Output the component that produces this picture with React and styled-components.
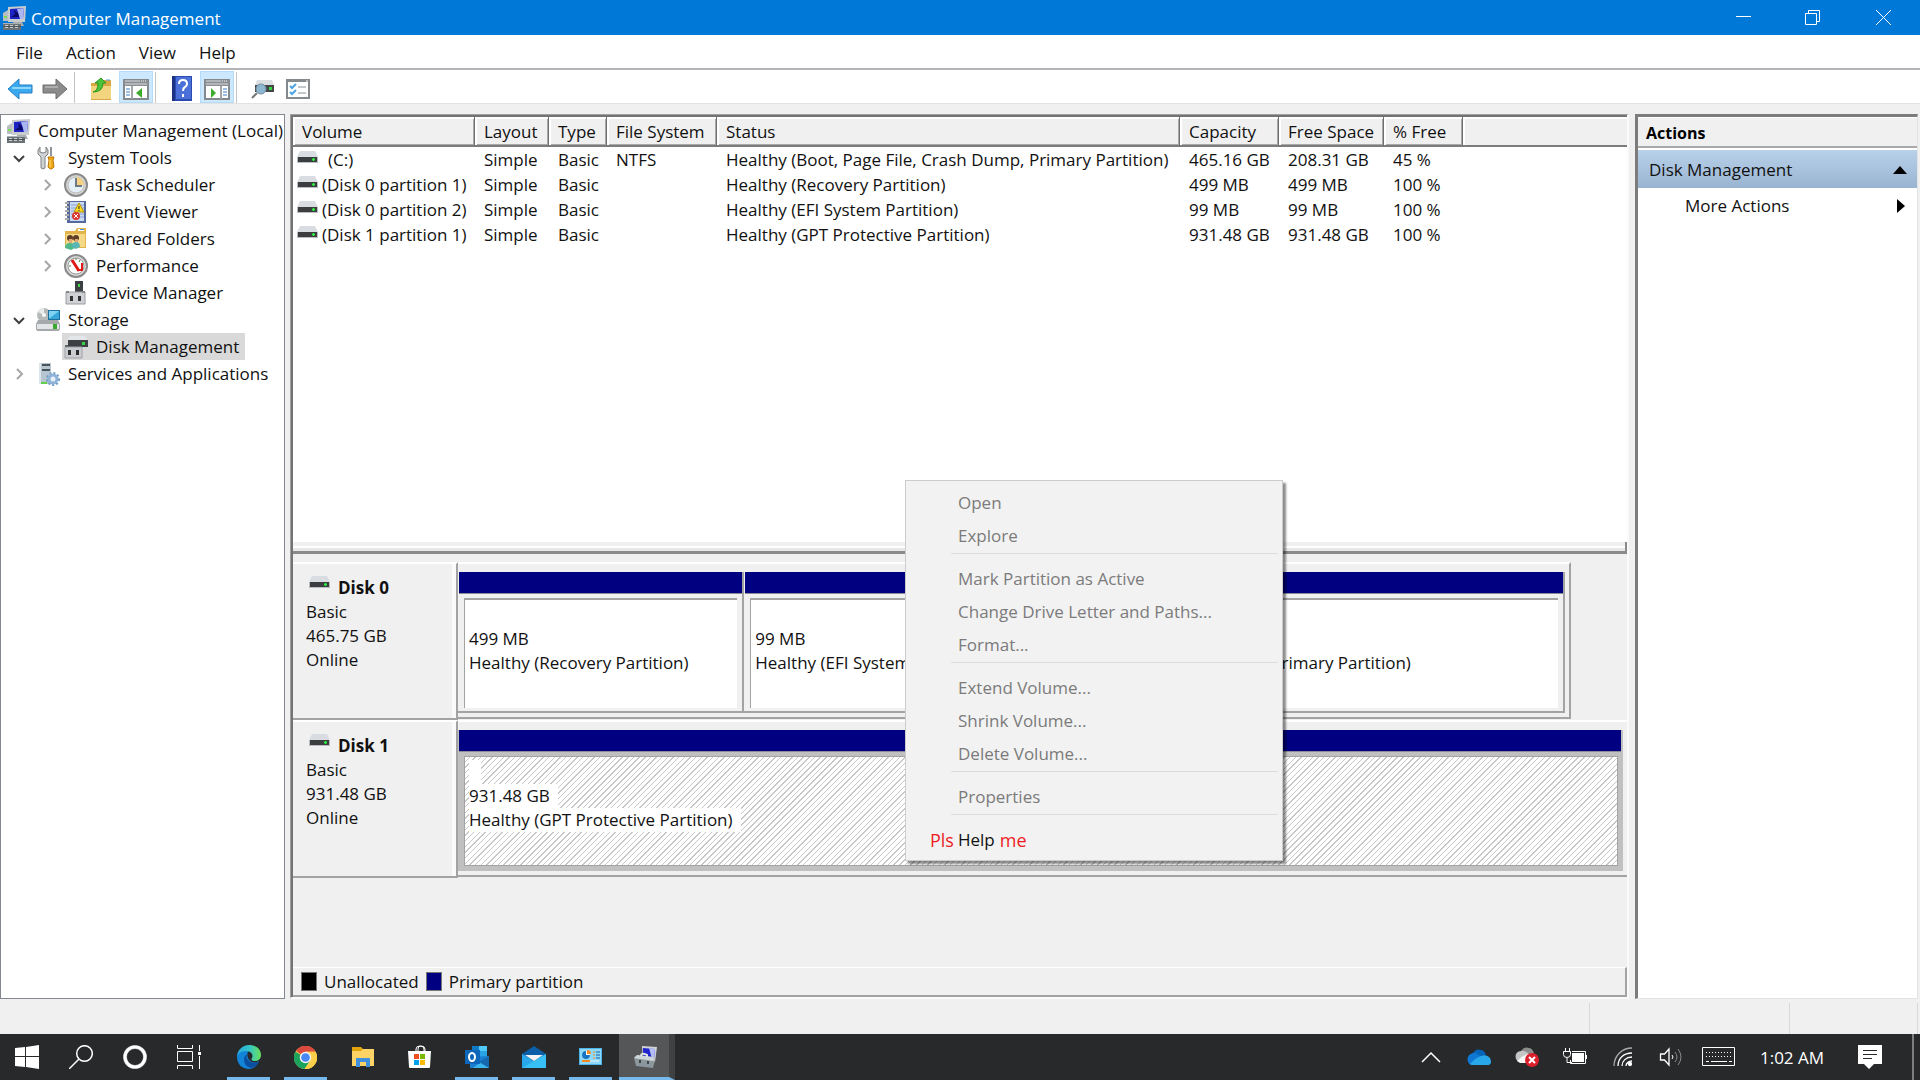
import React from 'react'
import styled, { createGlobalStyle, css } from 'styled-components'

const volumes = [
  { name: '(C:)', indent: true, fs: 'NTFS', status: 'Healthy (Boot, Page File, Crash Dump, Primary Partition)', capacity: '465.16 GB', free: '208.31 GB', percent: '45 %' },
  { name: '(Disk 0 partition 1)', fs: '', status: 'Healthy (Recovery Partition)', capacity: '499 MB', free: '499 MB', percent: '100 %' },
  { name: '(Disk 0 partition 2)', fs: '', status: 'Healthy (EFI System Partition)', capacity: '99 MB', free: '99 MB', percent: '100 %' },
  { name: '(Disk 1 partition 1)', fs: '', status: 'Healthy (GPT Protective Partition)', capacity: '931.48 GB', free: '931.48 GB', percent: '100 %' },
]

const columns = [
  { title: 'Volume', width: 182 },
  { title: 'Layout', width: 74 },
  { title: 'Type', width: 58 },
  { title: 'File System', width: 110 },
  { title: 'Status', width: 463 },
  { title: 'Capacity', width: 99 },
  { title: 'Free Space', width: 105 },
  { title: '% Free', width: 79 },
]

const menuGroups = [
  [ 'Open', 'Explore' ],
  [ 'Mark Partition as Active', 'Change Drive Letter and Paths...', 'Format...' ],
  [ 'Extend Volume...', 'Shrink Volume...', 'Delete Volume...' ],
  [ 'Properties' ],
]

/* ---------- icons ---------- */

const DriveIcon = () => (
  <svg width="22" height="13" viewBox="0 0 22 13">
    <path d="M3 0h15l3 6H0z" fill="#d9dde1" />
    <path d="M0 6h21v6H0z" fill="#b9bdc2" />
    <path d="M1 6h19v5H1z" fill="#3b3d3f" />
    <path d="M15 7h3v3h-3z" fill="#1f8f2a" />
    <path d="M16 7h1v3h-1zM15 8h3v1h-3z" fill="#35f04a" />
  </svg>
)

const ComputerIcon = () => (
  <svg width="24" height="24" viewBox="0 0 24 24">
    <path d="M1 7l5-3v11H1z" fill="#b9bec2" />
    <path d="M2 10h3v2H2z" fill="#7ddd4f" />
    <path d="M6 1l18-1-1 16H6z" fill="#c9cccd" />
    <path d="M8 3l14-1-1 11H8z" fill="#1c22c4" />
    <path d="M15 3l7-1-1 11h-3z" fill="#aab6f2" />
    <path d="M9 11l4-3-1-4 4 3 1 4z" fill="#0a0a66" />
    <path d="M11 16h9l2 4H11z" fill="#a9adaf" />
    <path d="M1 17h18v7H1z" fill="#6b7377" />
    <path d="M1 17h18v1H1z" fill="#aab1b5" />
    <path d="M3 19h3v3H3zM8 19h3v3H8zM13 19h3v3h-3z" fill="#c6cccf" />
    <path d="M1 20h18v1H1z" fill="#4b5357" />
  </svg>
)

const ToolsIcon = () => (
  <svg width="24" height="24" viewBox="0 0 24 24">
    <path d="M4 1L2 4v4l3 3v11q2 2 4 0V11l3-3V4L10 1v5L7 7 4 6z" fill="#cfd2d3" stroke="#7e8385" />
    <path d="M14 1h2v9h-2z" fill="#8d9396" />
    <path d="M12 11h6l-1 3 1 7q-3 4-6 0l1-7z" fill="#f0a818" stroke="#b97708" />
    <path d="M14 14v7" stroke="#ffdf7d" />
  </svg>
)

const ClockIcon = () => (
  <svg width="24" height="24" viewBox="0 0 24 24">
    <circle cx="12" cy="12" r="11" fill="#d6d6d4" stroke="#8a8a8a" strokeWidth="2" />
    <circle cx="12" cy="12" r="8" fill="#e4eff8" stroke="#bbb" />
    <path d="M12 4a8 8 0 0 1 8 8h-8z" fill="#f4d184" />
    <path d="M12 5v8h6" fill="none" stroke="#6f7a84" strokeWidth="2" />
  </svg>
)

const EventIcon = () => (
  <svg width="24" height="24" viewBox="0 0 24 24">
    <path d="M3 1h19v22H3z" fill="#56699c" />
    <path d="M6 2h14v19H6z" fill="#c9daf2" />
    <path d="M7 5h13M7 8h13M7 11h13M7 14h13M7 17h13" stroke="#8ea6d4" />
    <path d="M1 3h4M1 7h4M1 11h4M1 15h4M1 19h4" stroke="#aaa" strokeWidth="2" />
    <path d="M15 3l5 9H10z" fill="#ffdc20" stroke="#b49008" />
    <path d="M15 6v3M15 10v1" stroke="#222" />
    <circle cx="12" cy="16" r="4" fill="#d83a32" />
    <path d="M10 14l4 4M14 14l-4 4" stroke="#fff" />
  </svg>
)

const SharedIcon = () => (
  <svg width="24" height="24" viewBox="0 0 24 24">
    <path d="M1 4h10l2-3h9v20H1z" fill="#e2b44c" />
    <path d="M2 7h19v13H2z" fill="#f5d987" />
    <path d="M14 2h6v2h-6z" fill="#fff" />
    <path d="M16 2h4v1h-4z" fill="#4c95d8" />
    <circle cx="6" cy="11" r="3" fill="#5c3d28" />
    <circle cx="12" cy="11" r="3" fill="#5c3d28" />
    <path d="M5 12h3v4H5zM11 12h3v4h-3z" fill="#e0a878" />
    <path d="M1 21q0-5 5-5t5 5l-4 2z" fill="#4fb98a" />
    <path d="M8 20q0-5 4-5t4 5l-4 2z" fill="#58b7b4" />
  </svg>
)

const GaugeIcon = () => (
  <svg width="24" height="24" viewBox="0 0 24 24">
    <circle cx="12" cy="12" r="11" fill="#dadada" stroke="#8a8a8a" strokeWidth="2" />
    <circle cx="12" cy="12" r="8" fill="#fff" stroke="#999" />
    <path d="M5 12h2M7 7l1 1M12 4v2M16 6l-1 2" stroke="#477f48" />
    <path d="M8 6l7 11" fill="none" stroke="#e01818" strokeWidth="3" />
    <path d="M18 9v7h-5" fill="none" stroke="#e01818" strokeWidth="2" />
  </svg>
)

const DeviceIcon = () => (
  <svg width="24" height="24" viewBox="0 0 24 24">
    <path d="M11 0h8v12h-8z" fill="#3d4043" />
    <path d="M14 3h2v3h-2z" fill="#43d94a" />
    <path d="M2 11h19v12H2z" fill="#cfd1d5" stroke="#9a9da2" />
    <path d="M6 15h3v5H6zM14 15h3v5h-3z" fill="#333" />
    <path d="M2 10h3v2H2zM18 10h3v2h-3z" fill="#888" />
  </svg>
)

const StorageIcon = () => (
  <svg width="24" height="24" viewBox="0 0 24 24">
    <circle cx="8" cy="7" r="7" fill="#b6bab9" />
    <path d="M8 7L2 4q3-4 6-4z" fill="#e8eceb" />
    <circle cx="8" cy="7" r="2" fill="#f8f8f8" />
    <path d="M12 2h12v10H12z" fill="#1d6f9c" />
    <path d="M13 3h10v8H13z" fill="#37a6d8" />
    <path d="M13 3h10l-9 7h-1z" fill="#7fd3f2" />
    <path d="M2 12h20l2 4v5q0 2-2 2H2q-2 0-2-2v-5z" fill="#a6a9ab" />
    <path d="M1 16h22v5H1z" fill="#e2e4e5" />
    <path d="M17 16h4v5h-4z" fill="#38a92e" />
  </svg>
)

const DiskMgmtIcon = () => (
  <svg width="24" height="24" viewBox="0 0 24 24">
    <path d="M6 1h15l3 4H3z" fill="#e4e6e9" />
    <path d="M4 5h20v7H4z" fill="#3d4042" />
    <path d="M18 7h3v3h-3z" fill="#35d643" />
    <path d="M1 12h17v11H1z" fill="#c9ccd0" stroke="#a0a3a8" />
    <path d="M4 15h3v5H4zM12 15h3v5h-3z" fill="#2c2c2c" />
    <path d="M1 10h3v2H1z" fill="#666" />
  </svg>
)

const ServicesIcon = () => (
  <svg width="24" height="24" viewBox="0 0 24 24">
    <path d="M3 1h12v21H3z" fill="#b6c5cf" />
    <path d="M3 1h2v21H3z" fill="#dce5ea" />
    <path d="M6 3h8M6 8h8" stroke="#46545e" strokeWidth="2" />
    <path d="M5 20h6v2H5z" fill="#5fd04d" />
    <circle cx="17" cy="17" r="6" fill="none" stroke="#6d9bc6" strokeWidth="2" strokeDasharray="2 2" />
    <circle cx="17" cy="17" r="4" fill="#e7f0f8" stroke="#8fb3d6" strokeWidth="3" />
  </svg>
)

const ArrowIcon = ( { right } ) => (
  <svg width="26" height="24" viewBox="0 0 26 24">
    <path
      d={ right ? 'M25 12L14 2v6H1v8h13v6z' : 'M1 12L12 2v6h13v8H12v6z' }
      fill={ right ? '#8b8b8b' : '#3aaaf0' }
      stroke={ right ? '#6d6d6d' : '#2a7fc4' }
    />
    <path d={ right ? 'M3 10h13' : 'M5 11h19' } stroke={ right ? '#adadad' : '#90d6fb' } strokeWidth="2" />
  </svg>
)

const FolderUpIcon = () => (
  <svg width="24" height="24" viewBox="0 0 24 24">
    <path d="M2 6h10l2-3h8v20H2z" fill="#d9a744" />
    <path d="M2 9h20v13H2z" fill="#f3d57f" />
    <path d="M17 3h4" stroke="#5aa5df" />
    <path d="M4 15q5-1 5-9H6l6-5 5 5h-3q0 9-10 9z" fill="#4cc33b" stroke="#2c9822" />
  </svg>
)

const PaneIcon = ( { right } ) => (
  <svg width="26" height="21" viewBox="0 0 26 21">
    <path d="M1 1h24v19H1z" fill="#fff" stroke="#84898e" strokeWidth="2" />
    <path d="M1 1h24v6H1z" fill="#8a8f94" />
    <path d="M2 2h15M2 5h22" stroke="#d8dadc" />
    <path d="M18 2h1M20 2h1M22 2h1" stroke="#fff" />
    <path d={ right ? 'M17 7v13' : 'M9 7v13' } stroke="#a3a7ab" strokeWidth="2" />
    <path d={ right ? 'M19 10h4M19 13h4M19 16h4' : 'M3 10h4M3 13h4M3 16h4' } stroke="#3c7cc6" />
    <path d={ right ? 'M7 9l5 5-5 5z' : 'M19 9l-6 5 6 5z' } fill="#3cab2e" />
  </svg>
)

const HelpBookIcon = () => (
  <svg width="20" height="25" viewBox="0 0 20 25">
    <path d="M0 0h20v25H0z" fill="#2a4bb0" />
    <path d="M4 1h15v22H4z" fill="#4b70d8" />
    <path d="M0 0h3v25H0z" fill="#1c3384" />
    <path d="M7 8q0-4 4-4t4 4q0 2-2 3t-2 4M11 18v3" fill="none" stroke="#fff" strokeWidth="2" />
  </svg>
)

const SearchDriveIcon = () => (
  <svg width="24" height="22" viewBox="0 0 24 22">
    <path d="M6 2h15l2 5H4z" fill="#dcdfe2" />
    <path d="M4 7h19v7H4z" fill="#434648" />
    <path d="M18 9h3v3h-3z" fill="#34d541" />
    <circle cx="10" cy="11" r="5" fill="#8fb6d0" stroke="#6e8da3" />
    <path d="M6 15l-5 5" stroke="#777" strokeWidth="2" />
  </svg>
)

const ChecklistIcon = () => (
  <svg width="24" height="20" viewBox="0 0 24 20">
    <path d="M1 1h22v18H1z" fill="#fff" stroke="#858a8f" strokeWidth="2" />
    <path d="M1 2h22" stroke="#858a8f" strokeWidth="2" />
    <path d="M20 2h2" stroke="#fff" />
    <path d="M4 7l2 2 4-4M4 13l2 2 4-4" fill="none" stroke="#4ba4e4" strokeWidth="2" />
    <path d="M12 8h8M12 14h8" stroke="#c5c8ca" strokeWidth="2" />
  </svg>
)

const Chevron = ( { open } ) => (
  <svg width="12" height="12" viewBox="0 0 12 12">
    <path
      d={ open ? 'M1 4l5 5 5-5' : 'M4 1l5 5-5 5' }
      fill="none"
      stroke={ open ? '#404040' : '#a6a6a6' }
      strokeWidth="2"
    />
  </svg>
)

const WindowsLogo = () => (
  <svg width="24" height="24" viewBox="0 0 24 24" fill="#fff">
    <path d="M0 3l10-1v9H0zM11 2l13-2v11H11zM0 12h10v10L0 21zM11 12h13v12l-13-2z" />
  </svg>
)

const SearchIcon = () => (
  <svg width="24" height="24" viewBox="0 0 24 24" fill="none" stroke="#fff" strokeWidth="1.5">
    <circle cx="15.500" cy="8.500" r="7.800" />
    <path d="M10 14L0 24" />
  </svg>
)

const CortanaIcon = () => (
  <svg width="24" height="24" viewBox="0 0 24 24" fill="none">
    <circle cx="12" cy="12" r="10" stroke="#999" strokeWidth="4" />
    <circle cx="12" cy="12" r="10" stroke="#fff" strokeWidth="3" />
  </svg>
)

const TaskViewIcon = () => (
  <svg width="24" height="24" viewBox="0 0 24 24" fill="none" stroke="#fff">
    <path d="M.5 0v3.500h15V0M.5 6.500h15v10H.5zM.5 24v-3.500h15V24M22.500 0v6M22.500 11v13" />
    <path d="M21 7h3v3h-3z" fill="#fff" stroke="none" />
  </svg>
)

const EdgeIcon = () => (
  <svg width="24" height="24" viewBox="0 0 24 24">
    <defs>
      <linearGradient id="edgeTop" x1="0" x2="1">
        <stop offset="0" stopColor="#2aa5e0" />
        <stop offset=".5" stopColor="#31c5c9" />
        <stop offset="1" stopColor="#6be05a" />
      </linearGradient>
    </defs>
    <path d="M0 12C0 5 6 3 12 6c-3 2-2 9 3 11 3 1 5 0 7-1-2 5-6 8-10 8C5 24 0 19 0 12z" fill="#1284d8" />
    <path d="M8 11c-3 5 1 12 7 12 4-1 7-5 7-7-5 3-11 1-12-3-1-2 0-3 1-4-1 0-2 1-3 2z" fill="#0c4fa0" />
    <path d="M0 11C1 4 6 0 12 0c8 0 12 5 12 10 0 4-3 6-6 6-4 0-4-2-3-3 2-4-2-7-6-7-5 0-8 3-9 5z" fill="url(#edgeTop)" />
  </svg>
)

const ChromeIcon = () => (
  <svg width="23" height="23" viewBox="0 0 24 24">
    <circle cx="12" cy="12" r="12" fill="#fbcf48" />
    <path d="M12 12L2 5a12 12 0 0 1 20.500 1H12z" fill="#db4a3d" />
    <path d="M12 12L1.500 6A12 12 0 0 0 11 24l6-9z" fill="#1ba35d" />
    <path d="M12 6h10.500A12 12 0 0 1 11 24l6-9z" fill="#fbcf48" />
    <circle cx="12" cy="12" r="6" fill="#f4f4f4" />
    <circle cx="12" cy="12" r="4.500" fill="#4688f4" />
  </svg>
)

const ExplorerIcon = () => (
  <svg width="24" height="22" viewBox="0 0 24 22">
    <path d="M1 1h9l2 2v4H1z" fill="#e0a30b" />
    <path d="M1 5h9l2-2h11v17H1z" fill="#fdd365" />
    <path d="M5 21v-9h14v9h-4v-5H9v5z" fill="#3f90dd" />
  </svg>
)

const StoreIcon = () => (
  <svg width="24" height="24" viewBox="0 0 24 24">
    <path d="M8 6V4q0-3 4-3t4 3v2M10 6V4q0-3 3-3 4 0 4 3v2" fill="none" stroke="#fff" />
    <path d="M0 6h23l-1 16q0 1-1 1H2q-1 0-1-1z" fill="#fff" />
    <path d="M6 9h5v5H6z" fill="#f04e1f" />
    <path d="M12 9h5v5h-5z" fill="#7cb701" />
    <path d="M6 15h5v5H6z" fill="#00a2ed" />
    <path d="M12 15h5v5h-5z" fill="#fdb800" />
  </svg>
)

const OutlookIcon = () => (
  <svg width="24" height="24" viewBox="0 0 24 24">
    <path d="M7 1h15v12H7z" fill="#1179c6" />
    <path d="M14 1h8v5h-8z" fill="#4ec9f8" />
    <path d="M14 6h8v7h-8z" fill="#27a3e6" />
    <path d="M5 12l19-1v12H5z" fill="#1a7fd0" />
    <path d="M24 11v12H8z" fill="#3bb7f0" />
    <path d="M24 11L14 17l10 6z" fill="#1568ae" />
    <path d="M0 5h15v14H0z" fill="#0c67bb" />
    <ellipse cx="7" cy="12" rx="3" ry="4" fill="none" stroke="#fff" strokeWidth="2" />
  </svg>
)

const MailIcon = () => (
  <svg width="24" height="24" viewBox="0 0 24 24">
    <path d="M0 9l12-8 12 8v5H0z" fill="#0b5fa8" />
    <path d="M0 9l12 7L24 9v14H0z" fill="#28a8ea" />
    <path d="M24 9v14H0z" fill="#36c0f5" />
    <path d="M3 10h18l-9 6z" fill="#f5f5f5" />
  </svg>
)

const ControlPanelIcon = () => (
  <svg width="24" height="18" viewBox="0 0 24 18">
    <path d="M0 0h23v17H0z" fill="#4cb4e8" />
    <path d="M1 1h21v15H1z" fill="#8ed8fa" />
    <circle cx="7" cy="7" r="4" fill="#fff" />
    <path d="M7 7V3a4 4 0 1 0 4 4z" fill="#1774c2" />
    <path d="M8 2a4 4 0 0 1 4 4H8z" fill="#f58b1f" />
    <path d="M14 4h2M14 7h2M14 10h2" stroke="#f58b1f" />
    <path d="M17 4h4M17 7h4M17 10h4" stroke="#175e9e" />
    <path d="M3 13h8" stroke="#f58b1f" strokeWidth="2" />
    <path d="M11 13h9" stroke="#e8f7ff" />
  </svg>
)

const ToolboxIcon = () => (
  <svg width="24" height="24" viewBox="0 0 24 24">
    <path d="M8 1l15 1-2 15H9z" fill="#d1d4d6" />
    <path d="M9 3l12 1-1 10H9z" fill="#2026cc" />
    <path d="M15 3l6 1-1 10h-2z" fill="#b4bef5" />
    <path d="M0 13l3-3 16 2 2 3-2 8-17-2z" fill="#8c979d" />
    <path d="M0 13l19 3 2-1-2-3-16-2z" fill="#ced6da" />
    <path d="M7 11q0-4 6-1v2" fill="none" stroke="#dfe3e5" strokeWidth="2" />
    <path d="M5 15h2v3H5zM13 16h2v3h-2z" fill="#3f4648" />
  </svg>
)

const OneDriveIcon = () => (
  <svg width="24" height="18" viewBox="0 0 24 18">
    <path d="M6 5q3-5 8-3 3 0 5 5l-6 2z" fill="#0364b8" />
    <path d="M1 14q-2-7 5-9 3-1 8 4l-10 8q-2-1-3-3z" fill="#0f78d4" />
    <path d="M3 16q5-6 11-8 6-2 9 2 3 7-3 7H5q-1 0-2-1z" fill="#28a8ea" />
  </svg>
)

const SyncErrorIcon = () => (
  <svg width="24" height="22" viewBox="0 0 24 22">
    <path d="M6 5q3-5 8-3 3 0 5 5l-6 2z" fill="#8d8d8d" />
    <path d="M1 13q-2-7 5-8 3-1 8 3l-10 8q-2-1-3-3z" fill="#c5c5c5" />
    <path d="M2 15q5-6 12-7v9H5z" fill="#f6f6f6" />
    <circle cx="17" cy="14" r="7" fill="#dc1f2d" />
    <path d="M14 11l6 6M20 11l-6 6" stroke="#fff" strokeWidth="2" />
  </svg>
)

const BatteryIcon = () => (
  <svg width="24" height="18" viewBox="0 0 24 18" fill="none" stroke="#fff">
    <path d="M2.500 0v3M6.500 0v3M.5 3.500h7v3q0 3-3.500 3t-3.500-3zM4 10v4.500h5M9 3.500h13.500v12H7.500V12" />
    <path d="M9 5h12v9H9z" fill="#fff" stroke="none" />
    <path d="M23.500 7v4" />
  </svg>
)

const WifiIcon = () => (
  <svg width="20" height="20" viewBox="0 0 20 20" fill="none" stroke="#fff" strokeWidth="1.3">
    <path d="M1 19C1 9 9 1 19 1" stroke="#aaa" />
    <path d="M5 19C5 11 11 6 19 6M9 19c0-5 4-9 10-9M13 19c0-3 3-5 6-5" />
    <circle cx="17" cy="17" r="1.500" fill="#fff" />
  </svg>
)

const VolumeIcon = () => (
  <svg width="24" height="20" viewBox="0 0 24 20" fill="none" stroke="#fff">
    <path d="M1.500 7h4L10 2v16l-4.500-5h-4z" strokeWidth="1.300" />
    <path d="M13 8q2 2 0 4" />
    <path d="M16 5q4 5 0 10M19 2q6 8 0 16" stroke="#8b8b8b" />
  </svg>
)

const KeyboardIcon = () => (
  <svg width="34" height="20" viewBox="0 0 34 20" fill="none" stroke="#fff">
    <path d="M.5.5h32v18H.5z" />
    <path d="M4 5.500h26M4 9.500h26" strokeDasharray="1 2" />
    <path d="M4 14.500h3M9 14.500h16M27 14.500h3" />
  </svg>
)

const NotificationIcon = () => (
  <svg width="24" height="26" viewBox="0 0 24 26">
    <path d="M0 1h24v19h-8l-5 5-5-5H0z" fill="#fff" />
    <path d="M5 6.500h14M5 10.500h14M5 14.500h9" stroke="#28292b" />
  </svg>
)

const TrayChevron = () => (
  <svg width="20" height="12" viewBox="0 0 20 12">
    <path d="M1 11l9-9 9 9" fill="none" stroke="#fff" strokeWidth="1.500" />
  </svg>
)

const MinimizeIcon = () => (
  <svg width="15" height="15" viewBox="0 0 15 15"><path d="M0 6.500h15" stroke="#fff" /></svg>
)

const RestoreIcon = () => (
  <svg width="16" height="16" viewBox="0 0 16 16" fill="none" stroke="#fff">
    <path d="M.5 3.500h11v11H.5zM3.500 3.500v-3h11v11h-3" />
  </svg>
)

const CloseIcon = () => (
  <svg width="15" height="15" viewBox="0 0 15 15"><path d="M0 0l15 15M15 0L0 15" stroke="#fff" /></svg>
)

const tree = [
  { label: 'Computer Management (Local)', level: 0, icon: <ComputerIcon /> },
  { label: 'System Tools', level: 1, icon: <ToolsIcon />, state: 'open' },
  { label: 'Task Scheduler', level: 2, icon: <ClockIcon />, state: 'closed' },
  { label: 'Event Viewer', level: 2, icon: <EventIcon />, state: 'closed' },
  { label: 'Shared Folders', level: 2, icon: <SharedIcon />, state: 'closed' },
  { label: 'Performance', level: 2, icon: <GaugeIcon />, state: 'closed' },
  { label: 'Device Manager', level: 2, icon: <DeviceIcon /> },
  { label: 'Storage', level: 1, icon: <StorageIcon />, state: 'open' },
  { label: 'Disk Management', level: 2, icon: <DiskMgmtIcon />, selected: true },
  { label: 'Services and Applications', level: 1, icon: <ServicesIcon />, state: 'closed' },
]

const apps = [
  { name: 'Microsoft Edge', icon: <EdgeIcon />, running: true },
  { name: 'Google Chrome', icon: <ChromeIcon />, running: true },
  { name: 'File Explorer', icon: <ExplorerIcon /> },
  { name: 'Microsoft Store', icon: <StoreIcon /> },
  { name: 'Outlook', icon: <OutlookIcon />, running: true },
  { name: 'Mail', icon: <MailIcon />, running: true },
  { name: 'Control Panel', icon: <ControlPanelIcon />, running: true },
  { name: 'Computer Management', icon: <ToolboxIcon />, active: true },
]

const App = () => (
  <>
    <GlobalStyle />
    <Desktop>
      <TitleBar>
        <ComputerIcon />
        <WindowTitle>Computer Management</WindowTitle>
        <WindowButton aria-label="Minimize"><MinimizeIcon /></WindowButton>
        <WindowButton aria-label="Restore"><RestoreIcon /></WindowButton>
        <WindowButton aria-label="Close"><CloseIcon /></WindowButton>
      </TitleBar>

      <MenuBar>
        <MenuButton>File</MenuButton>
        <MenuButton>Action</MenuButton>
        <MenuButton>View</MenuButton>
        <MenuButton>Help</MenuButton>
      </MenuBar>

      <Toolbar>
        <ToolButton aria-label="Back"><ArrowIcon /></ToolButton>
        <ToolButton aria-label="Forward"><ArrowIcon right /></ToolButton>
        <ToolDivider />
        <ToolButton aria-label="Up one level"><FolderUpIcon /></ToolButton>
        <ToolButton aria-label="Show console tree" $on><PaneIcon /></ToolButton>
        <ToolDivider />
        <ToolButton aria-label="Help"><HelpBookIcon /></ToolButton>
        <ToolButton aria-label="Show action pane" $on><PaneIcon right /></ToolButton>
        <ToolDivider />
        <ToolButton aria-label="Rescan disks"><SearchDriveIcon /></ToolButton>
        <ToolButton aria-label="Settings"><ChecklistIcon /></ToolButton>
      </Toolbar>

      <Workspace>
        <TreePane>
          { tree.map( node => (
            <TreeRow key={ node.label } $level={ node.level }>
              { node.level > 0 && (
                <Expander>{ node.state && <Chevron open={ node.state === 'open' } /> }</Expander>
              ) }
              <TreeButton $selected={ node.selected }>
                { node.icon }
                <span>{ node.label }</span>
              </TreeButton>
            </TreeRow>
          ) ) }
        </TreePane>

        <CenterPane>
          <VolumeArea>
            <VolumeTable>
              <colgroup>
                { columns.map( col => <col key={ col.title } width={ col.width } /> ) }
                <col />
              </colgroup>
              <thead>
                <tr>
                  { columns.map( col => <HeadCell key={ col.title }>{ col.title }</HeadCell> ) }
                  <HeadCell as="td" $last />
                </tr>
              </thead>
              <tbody>
                { volumes.map( vol => (
                  <tr key={ vol.name }>
                    <Cell $first>
                      <VolumeName $indent={ vol.indent }>
                        <DriveIcon />
                        <span>{ vol.name }</span>
                      </VolumeName>
                    </Cell>
                    <Cell>Simple</Cell>
                    <Cell>Basic</Cell>
                    <Cell>{ vol.fs }</Cell>
                    <Cell>{ vol.status }</Cell>
                    <Cell>{ vol.capacity }</Cell>
                    <Cell>{ vol.free }</Cell>
                    <Cell>{ vol.percent }</Cell>
                    <Cell />
                  </tr>
                ) ) }
              </tbody>
            </VolumeTable>
          </VolumeArea>

          <Splitter />

          <DiskArea>
            <DiskRow>
              <DiskLabel>
                <DiskName><DriveIcon />Disk 0</DiskName>
                <div>Basic</div>
                <div>465.75 GB</div>
                <div>Online</div>
              </DiskLabel>
              <DiskTrack $partial>
                <Partitions $columns="286fr 213fr 607fr">
                  <Partition>
                    <Band />
                    <PartitionBody>
                      <Line>&nbsp;</Line>
                      <Line>499 MB</Line>
                      <Line>Healthy (Recovery Partition)</Line>
                    </PartitionBody>
                  </Partition>
                  <Partition>
                    <Band />
                    <PartitionBody>
                      <Line>&nbsp;</Line>
                      <Line>99 MB</Line>
                      <Line>Healthy (EFI System Partition)</Line>
                    </PartitionBody>
                  </Partition>
                  <Partition>
                    <Band />
                    <PartitionBody>
                      <Line>(C:)</Line>
                      <Line>465.16 GB NTFS</Line>
                      <Line>Healthy (Boot, Page File, Crash Dump, Primary Partition)</Line>
                    </PartitionBody>
                  </Partition>
                </Partitions>
              </DiskTrack>
            </DiskRow>

            <DiskRow>
              <DiskLabel>
                <DiskName><DriveIcon />Disk 1</DiskName>
                <div>Basic</div>
                <div>931.48 GB</div>
                <div>Online</div>
              </DiskLabel>
              <DiskTrack>
                <Partitions $columns="1fr">
                  <Partition $selected>
                    <Band />
                    <PartitionBody $selected>
                      <Line>&nbsp;</Line>
                      <Line>931.48 GB</Line>
                      <Line>Healthy (GPT Protective Partition)</Line>
                    </PartitionBody>
                  </Partition>
                </Partitions>
              </DiskTrack>
            </DiskRow>
          </DiskArea>

          <Legend>
            <Swatch $color="#000" />
            <span>Unallocated</span>
            <Swatch $color="#000080" />
            <span>Primary partition</span>
          </Legend>
        </CenterPane>

        <ActionsPane>
          <ActionsTitle>Actions</ActionsTitle>
          <ActionsGroup>
            Disk Management
            <svg width="14" height="8" viewBox="0 0 14 8"><path d="M7 0l7 8H0z" /></svg>
          </ActionsGroup>
          <ActionsItem>
            More Actions
            <svg width="8" height="14" viewBox="0 0 8 14"><path d="M0 0l8 7-8 7z" /></svg>
          </ActionsItem>
        </ActionsPane>
      </Workspace>

      <StatusBar>
        <StatusCell $grow />
        <StatusCell $width={ 200 } />
        <StatusCell $width={ 128 } />
      </StatusBar>

      <Taskbar>
        <SystemButton aria-label="Start"><WindowsLogo /></SystemButton>
        <SystemButton aria-label="Search"><SearchIcon /></SystemButton>
        <SystemButton aria-label="Cortana"><CortanaIcon /></SystemButton>
        <SystemButton aria-label="Task view"><TaskViewIcon /></SystemButton>
        <AppList>
          { apps.map( app => (
            <AppButton key={ app.name } aria-label={ app.name } $running={ app.running } $active={ app.active }>
              { app.icon }
            </AppButton>
          ) ) }
        </AppList>
        <TrayButton aria-label="Show hidden icons"><TrayChevron /></TrayButton>
        <TrayButton aria-label="OneDrive"><OneDriveIcon /></TrayButton>
        <TrayButton aria-label="OneDrive sync error"><SyncErrorIcon /></TrayButton>
        <TrayButton aria-label="Battery"><BatteryIcon /></TrayButton>
        <TrayButton aria-label="Network"><WifiIcon /></TrayButton>
        <TrayButton aria-label="Volume"><VolumeIcon /></TrayButton>
        <TrayButton aria-label="Touch keyboard"><KeyboardIcon /></TrayButton>
        <Clock>1:02 AM</Clock>
        <NotifyButton aria-label="Notifications"><NotificationIcon /></NotifyButton>
        <ShowDesktop aria-label="Show desktop" />
      </Taskbar>

      <ContextMenu>
        { menuGroups.map( group => (
          <MenuGroup key={ group[ 0 ] }>
            { group.map( label => (
              <MenuItem key={ label } disabled>
                <Gutter />
                <span>{ label }</span>
              </MenuItem>
            ) ) }
          </MenuGroup>
        ) ) }
        <MenuItem>
          <Gutter>Pls</Gutter>
          <span>Help</span>
          <Note>me</Note>
        </MenuItem>
      </ContextMenu>
    </Desktop>
  </>
)

export default App

const GlobalStyle = createGlobalStyle`
  * {
    box-sizing: border-box;
  }

  body {
    margin: 0;
    font-family: "Open Sans", "Noto Sans", sans-serif;
    font-size: 17px;
    line-height: 24px;
    color: #111;
    background: #f0f0f0;
  }

  button {
    margin: 0;
    padding: 0;
    border: 0;
    background: none;
    font: inherit;
    color: inherit;
    text-align: left;
  }

  svg {
    display: block;
    flex: none;
  }
`

const Desktop = styled.div`
  position: relative;
  display: flex;
  flex-direction: column;
  min-height: 100vh;
  white-space: nowrap;
`

const TitleBar = styled.header`
  display: flex;
  align-items: center;
  height: 35px;
  padding: 0 2px;
  background: #0078d7;
  color: white;
`

const WindowTitle = styled.span`
  flex: 1;
  padding: 2px 0 0 5px;
`

const WindowButton = styled.button`
  display: flex;
  align-items: center;
  justify-content: center;
  width: 70px;
  height: 100%;
`

const MenuBar = styled.nav`
  display: flex;
  gap: 23px;
  height: 35px;
  padding: 2px 16px 0;
  border-bottom: 2px solid #b4b4b8;
  background: white;
`

const MenuButton = styled.button``

const Toolbar = styled.div`
  display: flex;
  gap: 1px;
  height: 34px;
  padding: 1px 3px 0;
  border-bottom: 1px solid #e2e2e2;
  background: white;
`

const ToolButton = styled.button`
  display: flex;
  align-items: center;
  justify-content: center;
  width: 34px;
  height: 32px;
  padding-top: 3px;

  ${ props => props.$on && css`
    padding-top: 5px;
    background: #cce8ff;
    box-shadow: inset 0 0 0 1px #b5dbfa;
  ` }
`

const ToolDivider = styled.span`
  width: 1px;
  margin: 1px 8px 0 1px;
  background: #c4c4c4;
`

const Workspace = styled.main`
  display: flex;
  flex: 1;
  gap: 5px;
  padding: 10px 2px 1px 0;
`

const TreePane = styled.ul`
  width: 285px;
  margin: 0;
  padding: 2px 0 0;
  border: 1px solid #828790;
  background: white;
  list-style: none;
`

const TreeRow = styled.li`
  display: flex;
  height: 27px;
  padding-left: ${ props => [ 3, 12, 40 ][ props.$level ] }px;
`

const Expander = styled.span`
  display: flex;
  align-items: center;
  width: 21px;
`

const TreeButton = styled.button`
  display: flex;
  align-items: center;
  gap: 8px;
  height: 27px;
  padding: 0 6px 0 2px;
  background: ${ props => props.$selected ? '#d9d9d9' : 'transparent' };
`

const CenterPane = styled.section`
  display: flex;
  flex: 1;
  flex-direction: column;
  min-width: 0;
  margin-right: 1px;
  border: 1px solid #a0a0a0;
  border-right: 2px solid #fafafa;
  border-bottom: 2px solid #fafafa;
  box-shadow: inset 2px 2px 0 #737373;
  padding: 2px 0 0 2px;
`

const VolumeArea = styled.div`
  flex: 429 0 0;
  background: white;
`

const VolumeTable = styled.table`
  width: 100%;
  table-layout: fixed;
  border-collapse: separate;
  border-spacing: 0;
`

const HeadCell = styled.th`
  height: 30px;
  padding: 2px 0 0 9px;
  border-bottom: 2px solid #7c7c7c;
  background: #f0f0f0;
  box-shadow: inset 2px 2px 0 #fff, inset -1px -1px 0 ${ props => props.$last ? '#f0f0f0' : '#a9a9a9' };
  border-right: ${ props => props.$last ? '0' : '1px solid #6e6e6e' };
  font-weight: 400;
  text-align: left;
`

const Cell = styled.td`
  height: 25px;
  padding: 0 0 0 ${ props => props.$first ? 4 : 9 }px;
`

const VolumeName = styled.div`
  display: flex;
  align-items: center;
  gap: ${ props => props.$indent ? 9 : 3 }px;

  svg {
    margin-bottom: 4px;
  }
`

const Splitter = styled.div`
  height: 12px;
  border-bottom: 3px solid #8a8a8a;
  border-right: 2px solid #8a8a8a;
  background: linear-gradient(#f0f0f0 4px, #fff 4px, #fff 6px, #e8e8e8 6px);
`

const DiskArea = styled.div`
  flex: 409 0 0;
  padding-top: 8px;
`

const DiskRow = styled.div`
  display: flex;
  height: 158px;
`

const DiskLabel = styled.div`
  width: 165px;
  padding: 12px 0 0 13px;
  border-top: 2px solid #fff;
  border-right: 2px solid #a3a3a3;
  border-bottom: 2px solid #a3a3a3;
  box-shadow: inset -4px 0 0 #fafafa;
`

const DiskName = styled.div`
  display: flex;
  align-items: center;
  gap: 7px;
  padding-left: 3px;
  font-weight: 700;

  svg {
    margin-bottom: 10px;
  }
`

const DiskTrack = styled.div`
  flex: 1;
  height: 157px;
  margin-right: ${ props => props.$partial ? '56px' : '0' };
  padding: 8px 4px 0 0;
  border-top: 2px solid #fff;
  border-bottom: 2px solid #a3a3a3;
  border-right: ${ props => props.$partial ? '2px solid #a3a3a3' : '0' };
`

const Partitions = styled.div`
  display: grid;
  grid-template-columns: ${ props => props.$columns };
`

const Partition = styled.div`
  min-width: 0;
  height: 141px;
  padding-left: 1px;
  border-right: 2px solid #a3a3a3;
  border-bottom: 2px solid #a3a3a3;
  overflow: hidden;

  ${ props => props.$selected && css`
    background: #c0c0c0;
    border-color: #c0c0c0;
  ` }
`

const Band = styled.div`
  height: 22px;
  border-bottom: 1px solid #8b8b96;
  background: #000080;
`

const PartitionBody = styled.div`
  height: 110px;
  margin: 4px 5px 0;
  padding: 3px 0 0 4px;
  border: 1px solid #a3a3a3;
  border-width: 2px 0 0 1px;
  background: white;

  ${ props => props.$selected && css`
    margin-right: 3px;
    border-width: 1px;
    background: repeating-linear-gradient(135deg, #fff 0, #fff 3px, #c8c8c8 3px, #c8c8c8 4px);
  ` }
`

const Line = styled.div`
  width: max-content;
  padding-right: 8px;
  background: white;
`

const Legend = styled.div`
  display: flex;
  align-items: center;
  gap: 7px;
  height: 30px;
  padding-left: 8px;
  border-top: 1px solid #fff;
  border-right: 2px solid #a3a3a3;
  border-bottom: 2px solid #a3a3a3;
`

const Swatch = styled.i`
  width: 16px;
  height: 19px;
  border: 1px solid #777;
  background: ${ props => props.$color };
`

const ActionsPane = styled.aside`
  width: 283px;
  border: 3px solid #7c7c7c;
  border-right: 1px solid #e3e3e3;
  border-bottom: 1px solid #e3e3e3;
  background: white;
`

const ActionsTitle = styled.div`
  height: 31px;
  padding: 3px 8px 0;
  border-top: 1px solid #fff;
  border-bottom: 2px solid #a9a9a9;
  background: #f0f0f0;
  color: black;
  font-size: 16px;
  font-weight: 700;
`

const ActionsRow = styled.button`
  display: flex;
  align-items: center;
  justify-content: space-between;
  width: 100%;
  height: 38px;
`

const ActionsGroup = styled(ActionsRow)`
  margin-top: 2px;
  padding: 2px 10px 0 11px;
  background: linear-gradient(#b9d1ea, #99b4d1);
`

const ActionsItem = styled(ActionsRow)`
  padding: 0 12px 2px 47px;
`

const StatusBar = styled.footer`
  display: flex;
  height: 34px;
  padding-top: 3px;
`

const StatusCell = styled.div`
  flex: ${ props => props.$grow ? 1 : 'none' };
  width: ${ props => props.$width }px;
  border-right: 1px solid #d9d9d9;

  &:last-child {
    margin-right: 2px;
  }
`

const Taskbar = styled.footer`
  display: flex;
  height: 46px;
  background: #28292b;
  color: white;
`

const BarButton = styled.button`
  display: flex;
  align-items: center;
  justify-content: center;
  height: 46px;
`

const SystemButton = styled(BarButton)`
  width: 54px;
`

const AppList = styled.div`
  display: flex;
  flex: 1;
  padding-left: 4px;
`

const AppButton = styled(BarButton)`
  width: 57px;
  background: linear-gradient(#76b9ed, #76b9ed) center bottom / ${ props => props.$running ? '43px' : '0' } 3px no-repeat;

  ${ props => props.$active && css`
    width: 56px;
    padding: 3px 0 0 4px;
    border-right: 6px solid #404142;
    border-bottom: 3px solid #76b9ed;
    background: #555657;
  ` }
`

const TrayButton = styled(BarButton)`
  width: 48px;
`

const Clock = styled.time`
  width: 98px;
  line-height: 48px;
  text-align: center;
`

const NotifyButton = styled(BarButton)`
  width: 58px;
`

const ShowDesktop = styled.button`
  width: 8px;
  margin-left: 13px;
  border-left: 2px solid #7d7e80;
`

const ContextMenu = styled.div`
  position: absolute;
  top: 480px;
  left: 905px;
  width: 378px;
  padding: 5px 4px 4px 0;
  border: 1px solid #ccc;
  background: #f2f2f2;
  box-shadow: 3px 3px 2px rgba(0, 0, 0, .45);
`

const MenuGroup = styled.div`
  &::after {
    content: '';
    display: block;
    height: 1px;
    margin: 1px 0 8px 45px;
    background: #dcdcdc;
  }
`

const MenuItem = styled.button`
  display: flex;
  align-items: center;
  width: 100%;
  height: 33px;
  color: #111;

  &:disabled {
    color: #7b7b7b;
  }
`

const Gutter = styled.span`
  width: 52px;
  padding-left: 24px;
  color: #ed1c24;
  font-size: 18px;
`

const Note = styled.span`
  padding-left: 5px;
  color: #ed1c24;
  font-size: 18px;
`
